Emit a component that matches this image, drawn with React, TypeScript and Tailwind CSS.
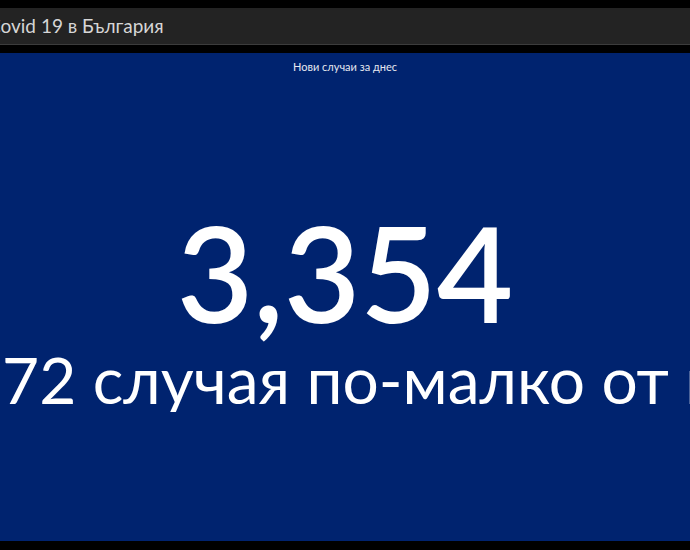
export default function App() {
  return (
    <div
      className="flex h-[550px] w-[690px] flex-col overflow-hidden bg-black"
      style={{ fontFamily: '"Lato", "Noto Sans", sans-serif' }}
    >
      <div className="mt-2 flex h-[37px] shrink-0 items-center overflow-hidden border-b border-[#3c3c3c] bg-[#232323]">
        <h1 className="ml-[-12px] whitespace-nowrap text-[19px] text-[#d6d6d6]">Covid 19 в България</h1>
      </div>

      <div className="mt-2 flex h-[488px] shrink-0 flex-col overflow-hidden bg-[#00236f]">
        <p className="mt-[6px] text-center text-[11px] text-[#e6e8ef]">Нови случаи за днес</p>
        <div className="mt-[130px] text-center text-[132px] font-semibold leading-none text-white">3,354</div>
        <div className="mt-[10px] overflow-hidden whitespace-nowrap text-[64px] leading-none text-white">
          <span className="ml-[-35px]">172 случая по-малко от вчера</span>
        </div>
      </div>
    </div>
  );
}
